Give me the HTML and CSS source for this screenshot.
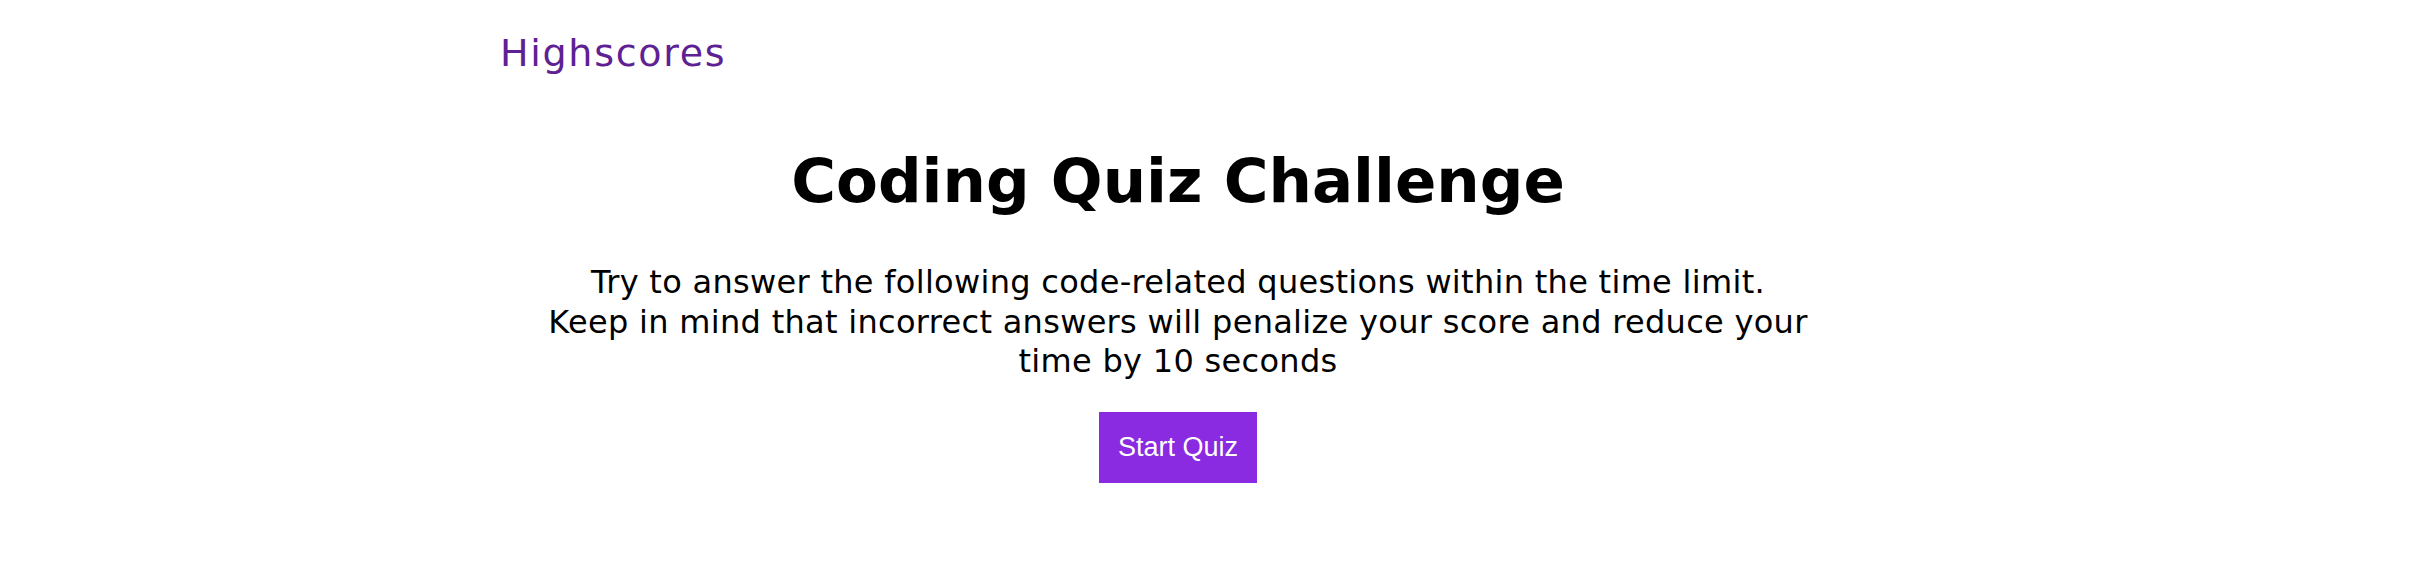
FILE: index.html
```html
<!DOCTYPE html>
<html>
<head>
<meta charset="utf-8">
<link rel="stylesheet" href="styles.css">
</head>
<body>
<div class="page">
  <header class="top">
    <a class="highscores" href="#">Highscores</a>
  </header>
  <main class="intro">
    <h1 class="title">Coding Quiz Challenge</h1>
    <p class="lead">Try to answer the following code-related questions within the time limit. Keep in mind that incorrect answers will penalize your score and reduce your time by 10 seconds</p>
    <button class="start">Start Quiz</button>
  </main>
</div>
</body>
</html>
```
FILE: styles.css
```css
html, body {
  margin: 0;
  padding: 0;
  background: #ffffff;
}
.page {
  margin-left: 500px;
  width: 1356px;
  font-family: "DejaVu Sans", "Liberation Sans", sans-serif;
  color: #000;
}
.top {
  padding-top: 29px;
}
.highscores {
  display: inline-block;
  font-size: 38px;
  line-height: 48px;
  letter-spacing: 1.7px;
  color: #5e2193;
  text-decoration: none;
}
.intro {
  display: flex;
  flex-direction: column;
  align-items: center;
  text-align: center;
}
.title {
  margin: 66px 0 0;
  font-size: 61px;
  line-height: 76px;
  font-weight: 700;
}
.lead {
  margin: 44px 0 0;
  width: 1262px;
  font-size: 32px;
  line-height: 39.5px;
  letter-spacing: 0.3px;
}
.start {
  margin-top: 30px;
  width: 158px;
  height: 71px;
  border: none;
  background: #8a2be2;
  color: #fff;
  font-family: "Liberation Sans", Arial, sans-serif;
  font-size: 27px;
  padding: 0;
}
```
